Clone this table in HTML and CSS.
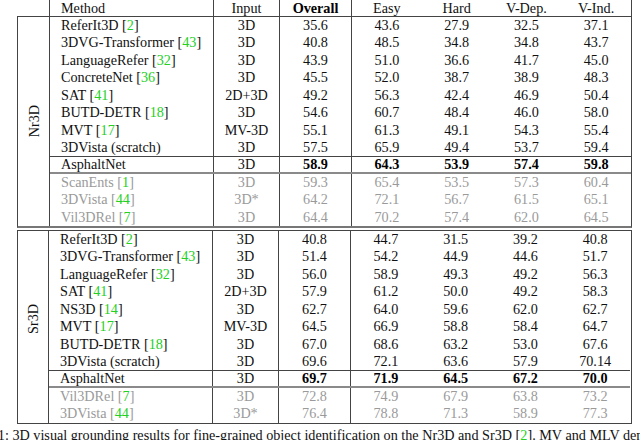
FILE: index.html
```html
<!DOCTYPE html>
<html>
<head>
<meta charset="utf-8">
<link rel="stylesheet" href="styles.css">
</head>
<body>
<div class="page">
  <div class="head-row">
    <div class="blank"></div>
    <div class="hcell method">Method</div>
    <div class="hcell input">Input</div>
    <div class="hcell overall"><b>Overall</b></div>
    <div class="hcell num">Easy</div>
    <div class="hcell num">Hard</div>
    <div class="hcell num">V-Dep.</div>
    <div class="hcell num last">V-Ind.</div>
  </div>

  <section class="block nr3d">
    <div class="grp"><span class="grp-label">Nr3D</span></div>
    <div class="rows">
      <div class="row"><div class="c method">ReferIt3D [<span class="cite">2</span>]</div><div class="c input">3D</div><div class="c overall">35.6</div><div class="c num">43.6</div><div class="c num">27.9</div><div class="c num">32.5</div><div class="c num">37.1</div></div>
      <div class="row"><div class="c method">3DVG-Transformer [<span class="cite">43</span>]</div><div class="c input">3D</div><div class="c overall">40.8</div><div class="c num">48.5</div><div class="c num">34.8</div><div class="c num">34.8</div><div class="c num">43.7</div></div>
      <div class="row"><div class="c method">LanguageRefer [<span class="cite">32</span>]</div><div class="c input">3D</div><div class="c overall">43.9</div><div class="c num">51.0</div><div class="c num">36.6</div><div class="c num">41.7</div><div class="c num">45.0</div></div>
      <div class="row"><div class="c method">ConcreteNet [<span class="cite">36</span>]</div><div class="c input">3D</div><div class="c overall">45.5</div><div class="c num">52.0</div><div class="c num">38.7</div><div class="c num">38.9</div><div class="c num">48.3</div></div>
      <div class="row"><div class="c method">SAT [<span class="cite">41</span>]</div><div class="c input">2D+3D</div><div class="c overall">49.2</div><div class="c num">56.3</div><div class="c num">42.4</div><div class="c num">46.9</div><div class="c num">50.4</div></div>
      <div class="row"><div class="c method">BUTD-DETR [<span class="cite">18</span>]</div><div class="c input">3D</div><div class="c overall">54.6</div><div class="c num">60.7</div><div class="c num">48.4</div><div class="c num">46.0</div><div class="c num">58.0</div></div>
      <div class="row"><div class="c method">MVT [<span class="cite">17</span>]</div><div class="c input">MV-3D</div><div class="c overall">55.1</div><div class="c num">61.3</div><div class="c num">49.1</div><div class="c num">54.3</div><div class="c num">55.4</div></div>
      <div class="row"><div class="c method">3DVista (scratch)</div><div class="c input">3D</div><div class="c overall">57.5</div><div class="c num">65.9</div><div class="c num">49.4</div><div class="c num">53.7</div><div class="c num">59.4</div></div>
      <div class="row ours"><div class="c method">AsphaltNet</div><div class="c input">3D</div><div class="c overall"><b>58.9</b></div><div class="c num"><b>64.3</b></div><div class="c num"><b>53.9</b></div><div class="c num"><b>57.4</b></div><div class="c num"><b>59.8</b></div></div>
      <div class="row muted"><div class="c method">ScanEnts [<span class="cite">1</span>]</div><div class="c input">3D</div><div class="c overall">59.3</div><div class="c num">65.4</div><div class="c num">53.5</div><div class="c num">57.3</div><div class="c num">60.4</div></div>
      <div class="row muted"><div class="c method">3DVista [<span class="cite">44</span>]</div><div class="c input">3D*</div><div class="c overall">64.2</div><div class="c num">72.1</div><div class="c num">56.7</div><div class="c num">61.5</div><div class="c num">65.1</div></div>
      <div class="row muted"><div class="c method">Vil3DRel [<span class="cite">7</span>]</div><div class="c input">3D</div><div class="c overall">64.4</div><div class="c num">70.2</div><div class="c num">57.4</div><div class="c num">62.0</div><div class="c num">64.5</div></div>
    </div>
  </section>

  <section class="block sr3d">
    <div class="grp grp-sr"><span class="grp-label">Sr3D</span></div>
    <div class="rows">
      <div class="row"><div class="c method">ReferIt3D [<span class="cite">2</span>]</div><div class="c input">3D</div><div class="c overall">40.8</div><div class="c num">44.7</div><div class="c num">31.5</div><div class="c num">39.2</div><div class="c num">40.8</div></div>
      <div class="row"><div class="c method">3DVG-Transformer [<span class="cite">43</span>]</div><div class="c input">3D</div><div class="c overall">51.4</div><div class="c num">54.2</div><div class="c num">44.9</div><div class="c num">44.6</div><div class="c num">51.7</div></div>
      <div class="row"><div class="c method">LanguageRefer [<span class="cite">32</span>]</div><div class="c input">3D</div><div class="c overall">56.0</div><div class="c num">58.9</div><div class="c num">49.3</div><div class="c num">49.2</div><div class="c num">56.3</div></div>
      <div class="row"><div class="c method">SAT [<span class="cite">41</span>]</div><div class="c input">2D+3D</div><div class="c overall">57.9</div><div class="c num">61.2</div><div class="c num">50.0</div><div class="c num">49.2</div><div class="c num">58.3</div></div>
      <div class="row"><div class="c method">NS3D [<span class="cite">14</span>]</div><div class="c input">3D</div><div class="c overall">62.7</div><div class="c num">64.0</div><div class="c num">59.6</div><div class="c num">62.0</div><div class="c num">62.7</div></div>
      <div class="row"><div class="c method">MVT [<span class="cite">17</span>]</div><div class="c input">MV-3D</div><div class="c overall">64.5</div><div class="c num">66.9</div><div class="c num">58.8</div><div class="c num">58.4</div><div class="c num">64.7</div></div>
      <div class="row"><div class="c method">BUTD-DETR [<span class="cite">18</span>]</div><div class="c input">3D</div><div class="c overall">67.0</div><div class="c num">68.6</div><div class="c num">63.2</div><div class="c num">53.0</div><div class="c num">67.6</div></div>
      <div class="row"><div class="c method">3DVista (scratch)</div><div class="c input">3D</div><div class="c overall">69.6</div><div class="c num">72.1</div><div class="c num">63.6</div><div class="c num">57.9</div><div class="c num">70.14</div></div>
      <div class="row ours"><div class="c method">AsphaltNet</div><div class="c input">3D</div><div class="c overall"><b>69.7</b></div><div class="c num"><b>71.9</b></div><div class="c num"><b>64.5</b></div><div class="c num"><b>67.2</b></div><div class="c num"><b>70.0</b></div></div>
      <div class="row muted"><div class="c method">Vil3DRel [<span class="cite">7</span>]</div><div class="c input">3D</div><div class="c overall">72.8</div><div class="c num">74.9</div><div class="c num">67.9</div><div class="c num">63.8</div><div class="c num">73.2</div></div>
      <div class="row muted"><div class="c method">3DVista [<span class="cite">44</span>]</div><div class="c input">3D*</div><div class="c overall">76.4</div><div class="c num">78.8</div><div class="c num">71.3</div><div class="c num">58.9</div><div class="c num">77.3</div></div>
    </div>
  </section>
</div>
<p class="caption">Table 1: 3D visual grounding results for fine-grained object identification on the Nr3D and Sr3D [<span class="cite">2</span>]. MV and MLV denote multi-view inputs.</p>
</body>
</html>
```

FILE: styles.css
```css
html, body {
  margin: 0;
  padding: 0;
  background: #fff;
}

body {
  font-family: "Liberation Serif", "Times New Roman", serif;
  font-size: 14.2px;
  color: #111;
  overflow: hidden;
}

.page {
  margin-left: 17px;
  width: 615px;
}

b {
  font-weight: bold;
  color: #000;
}

.cite {
  color: #22d022;
}

/* header */
.head-row {
  display: flex;
  height: 16px;
  line-height: 16px;
}

.blank {
  width: 32px;
  flex: none;
}

.hcell {
  flex: none;
  border-left: 1px solid #444;
  text-align: center;
  white-space: nowrap;
}

.hcell.method {
  width: 152px;
  padding-left: 11px;
  text-align: left;
}

.hcell.input {
  width: 65px;
}

.hcell.overall {
  width: 71px;
}

.hcell.num {
  width: 69.75px;
  border-left: none;
}

.hcell.overall + .hcell.num {
  border-left: 1px solid #444;
}

.hcell.last {
  border-right: 1px solid #444;
}

/* blocks */
.block {
  display: flex;
  border: 1px solid #444;
}

.nr3d {
  border-bottom: 2px solid #777;
}

.sr3d {
  margin-top: 2px;
}

.grp {
  width: 31px;
  flex: none;
  border-right: 1px solid #444;
  display: flex;
  align-items: center;
  justify-content: center;
}

.grp-sr {
  padding-bottom: 16px;
  box-sizing: border-box;
}

.grp-label {
  writing-mode: vertical-rl;
  transform: rotate(180deg);
  line-height: 16px;
}

.rows {
  width: 581px;
  flex: none;
}

.row {
  display: flex;
  height: 17.43px;
  line-height: 17.43px;
  box-sizing: border-box;
}

.row.ours {
  border-top: 1px solid #444;
  border-bottom: 2px solid #8a8a8a;
  line-height: 14.43px;
}

.row.muted {
  color: #9a9a9a;
}

.c {
  flex: none;
  text-align: center;
  white-space: nowrap;
}

.c.method {
  width: 152px;
  padding-left: 11px;
  text-align: left;
  border-right: 1px solid #444;
}

.c.input {
  width: 65px;
  border-right: 1px solid #444;
}

.c.overall {
  width: 71px;
  border-right: 1px solid #444;
}

.c.num {
  width: 69.75px;
}

/* caption */
.caption {
  margin: 3px 0 0 0;
  white-space: nowrap;
  text-indent: -37px;
  line-height: 17px;
  color: #111;
}
```
